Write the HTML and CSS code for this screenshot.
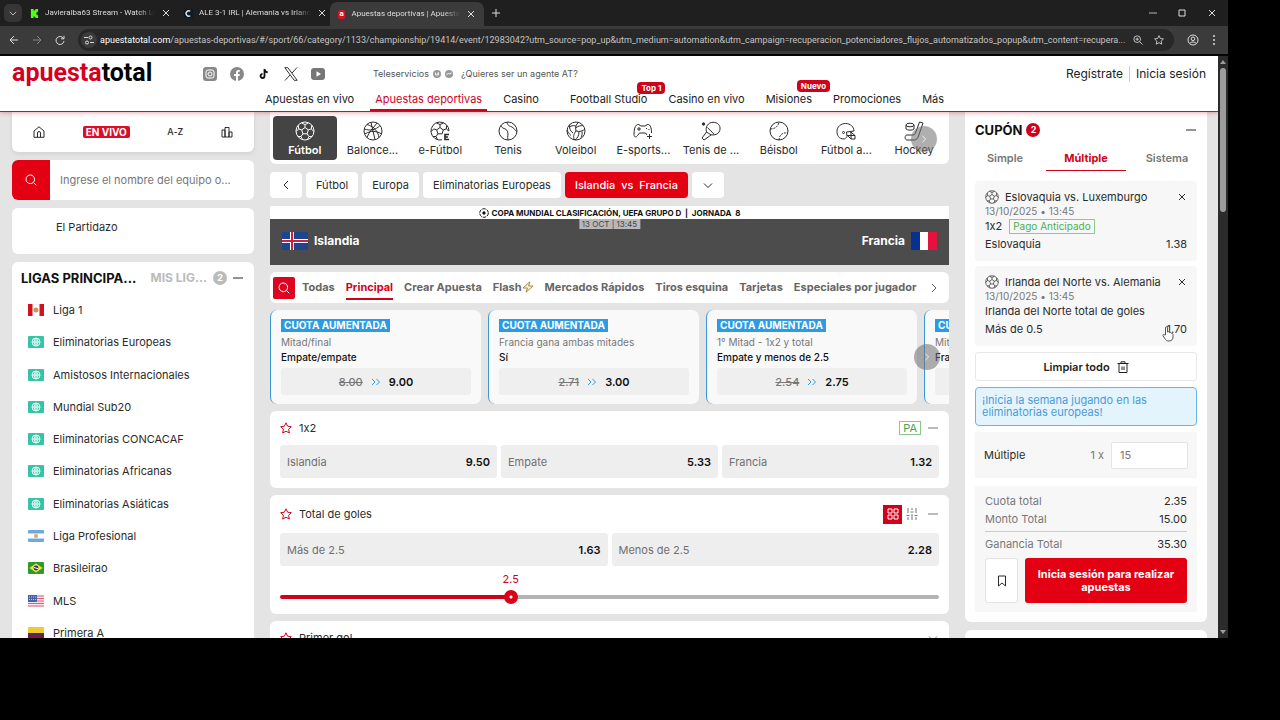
FILE: index.html
```
<!DOCTYPE html>
<html lang="es">
<head>
  <meta charset="UTF-8">
  <meta name="viewport" content="width=device-width, initial-scale=1.0">
  <title>Apuestas deportivas | Apuesta Total</title>
  <link rel="stylesheet" href="styles.css">
</head>
<body>
  <!-- shared icons -->
  <svg class="sprite" xmlns="http://www.w3.org/2000/svg">
    <symbol id="close" viewBox="0 0 10 10"><path d="M2 2l6 6M8 2L2 8"/></symbol>
    <symbol id="chev-down" viewBox="0 0 10 10"><path d="M1 3.500L5 7.500l4-4"/></symbol>
    <symbol id="chev-right" viewBox="0 0 10 10"><path d="M3 1l4 4-4 4"/></symbol>
    <symbol id="chev-left" viewBox="0 0 10 10"><path d="M7 1L3 5l4 4"/></symbol>
    <symbol id="minus" viewBox="0 0 10 10"><path d="M0 5h10"/></symbol>
    <symbol id="search" viewBox="0 0 12 12"><circle cx="5.300" cy="5.300" r="4.300"/><path d="M8.500 8.500L11.300 11.300"/></symbol>
    <symbol id="star" viewBox="0 0 12 12"><path d="M6 .8l1.600 3.400 3.700.5-2.700 2.600.7 3.700L6 9.200 2.700 11l.7-3.700L.7 4.700l3.700-.5z"/></symbol>
    <symbol id="ball" viewBox="0 0 20 20"><circle cx="10" cy="10" r="9"/><path d="M10 6.500l3.300 2.400-1.200 3.900H7.900L6.700 8.900zM10 6.500V3.500M13.300 8.900l3-1M12.100 12.800l1.900 2.700M7.900 12.800L6 15.500M6.700 8.900l-3-1M6.500 2L10 3.500 13.500 2M1.200 10.500l2.500-2.600-.4-3.500M18.800 10.500l-2.500-2.600.4-3.500M3 15.500l3 0 1.500 3M17 15.500l-3 0-1.500 3"/></symbol>
    <symbol id="world" viewBox="0 0 16 12"><rect width="16" height="12" rx="1" fill="#35c4a6" stroke="none"/><circle cx="8" cy="6" r="4"/><path d="M4 6h8M8 2v8M8 2c-2.500 2.500-2.500 5.500 0 8M8 2c2.500 2.500 2.500 5.500 0 8"/></symbol>
    <symbol id="double" viewBox="0 0 10 8"><path d="M1 1l3 3-3 3M5.500 1l3 3-3 3"/></symbol>
  </svg>

  <div class="browser">
    <div class="titlebar">
      <button class="tab-search" aria-label="Buscar pestañas"><svg class="icon s8"><use href="#chev-down"/></svg></button>
      <div class="tab">
        <svg class="favicon" viewBox="0 0 10 10"><path fill="#53fc18" d="M1 0h3v2h1V1h1V0h3v3H8v1H7v2h1v1h1v3H6V9H5V8H4v2H1z"/></svg>
        <span>Javieralba63 Stream - Watch Li</span>
        <button aria-label="Cerrar"><svg class="icon s10"><use href="#close"/></svg></button>
      </div>
      <div class="tab">
        <svg class="favicon" viewBox="0 0 10 10"><rect width="10" height="10" rx="2" fill="#0c1a26"/><path d="M7 2.500A3 3 0 1 0 7 7.500" fill="none" stroke="#dfe9f0" stroke-width="1.500"/></svg>
        <span>ALE 3-1 IRL | Alemania vs Irland</span>
        <button aria-label="Cerrar"><svg class="icon s10"><use href="#close"/></svg></button>
      </div>
      <div class="tab active">
        <b class="favicon at">a</b>
        <span>Apuestas deportivas | Apuesta</span>
        <button aria-label="Cerrar"><svg class="icon s10"><use href="#close"/></svg></button>
      </div>
      <button class="new-tab" aria-label="Nueva pestaña"><svg class="icon s8" viewBox="0 0 8 8"><path d="M4 0v8M0 4h8"/></svg></button>
      <div class="window-buttons">
        <button aria-label="Minimizar"><svg class="icon s8"><use href="#minus"/></svg></button>
        <button aria-label="Maximizar"><svg class="icon s8" viewBox="0 0 8 8"><path d="M1 1h6v6H1z"/></svg></button>
        <button aria-label="Cerrar ventana"><svg class="icon s10"><use href="#close"/></svg></button>
      </div>
    </div>

    <div class="toolbar">
      <button aria-label="Atrás"><svg class="icon s10" viewBox="0 0 10 10"><path d="M9 5H1M5 1L1 5l4 4"/></svg></button>
      <button class="off" aria-label="Adelante"><svg class="icon s10" viewBox="0 0 10 10"><path d="M1 5h8M5 1l4 4-4 4"/></svg></button>
      <button aria-label="Recargar"><svg class="icon s10" viewBox="0 0 10 10"><path d="M8.500 3.500A4 4 0 1 0 9 6M9 .8v3H6"/></svg></button>
      <div class="address">
        <span class="site-info"><svg class="icon s10" viewBox="0 0 10 10"><path d="M0 2.500h4M6 7.500h4"/><circle cx="6.500" cy="2.500" r="1.500"/><circle cx="3" cy="7.500" r="1.500"/></svg></span>
        <span class="url"><em>apuestatotal.com</em>/apuestas-deportivas/#/sport/66/category/1133/championship/19414/event/12983042?utm_source=pop_up&amp;utm_medium=automation&amp;utm_campaign=recuperacion_potenciadores_flujos_automatizados_popup&amp;utm_content=recupera...</span>
        <svg class="icon s10" viewBox="0 0 12 12"><circle cx="5" cy="5" r="4"/><path d="M8 8l3.500 3.500M5 3v4M3 5h4"/></svg>
        <svg class="icon s10 bookmark" viewBox="0 0 12 12"><use href="#star"/></svg>
      </div>
      <button aria-label="Perfil"><svg class="icon s12" viewBox="0 0 12 12"><circle cx="6" cy="6" r="5"/><circle cx="6" cy="4.800" r="1.800"/><path d="M2.800 9.500c1-2 5.400-2 6.400 0"/></svg></button>
      <button aria-label="Menú"><svg class="dots" viewBox="0 0 4 12"><circle cx="2" cy="2" r="1"/><circle cx="2" cy="6" r="1"/><circle cx="2" cy="10" r="1"/></svg></button>
    </div>

    <div class="viewport">
      <div class="page">
        <header class="header">
          <div class="header-top">
            <a class="logo" href="#">apuesta<span>total</span></a>
            <div class="social">
              <a href="#" aria-label="Instagram"><svg viewBox="0 0 14 14"><rect width="14" height="14" rx="3" fill="#888"/><rect x="3" y="3" width="8" height="8" rx="2" fill="none" stroke="#fff"/><circle cx="7" cy="7" r="2" fill="none" stroke="#fff"/></svg></a>
              <a href="#" aria-label="Facebook"><svg viewBox="0 0 14 14"><circle cx="7" cy="7" r="7" fill="#888"/><path fill="#fff" d="M6 14V9H4V7h2V5.500C6 3.500 7.200 2.800 9.800 3v1.800C8.300 4.700 8 5 8 6v1h1.800l-.3 2H8v5z"/></svg></a>
              <a href="#" aria-label="TikTok"><svg viewBox="0 0 14 14"><path d="M7.500 2v7a2 2 0 1 1-2-2M7.500 2.500c.5 2 1.500 2.700 3.200 2.800" fill="none" stroke="#111" stroke-width="1.800"/></svg></a>
              <a href="#" aria-label="X"><svg viewBox="0 0 14 14"><path d="M.8.700h3L13.200 13.300h-3zM13 .500L8 6M6 8l-5 5.500" fill="none" stroke="#333"/></svg></a>
              <a href="#" aria-label="YouTube"><svg viewBox="0 0 14 14"><rect y="1" width="14" height="12" rx="3" fill="#777"/><path fill="#fff" d="M5.500 4.300v5.400L10 7z"/></svg></a>
            </div>
            <a class="small-link" href="#">Teleservicios
              <svg class="s8" viewBox="0 0 8 8"><circle cx="4" cy="4" r="4" fill="#999"/><path d="M2.500 2.500v2.500h3V3M4 5l1.500-3" fill="none" stroke="#fff" stroke-width=".8"/></svg>
              <svg class="s8" viewBox="0 0 8 8"><circle cx="4" cy="4" r="4" fill="#999"/><path d="M1.500 5l2-2 1 1 2-1" fill="none" stroke="#fff"/></svg>
            </a>
            <a class="small-link" href="#">¿Quieres ser un agente AT?</a>
            <div class="account">
              <a href="#">Regístrate</a>
              <a href="#">Inicia sesión</a>
            </div>
          </div>
          <nav class="main-nav">
            <a href="#">Apuestas en vivo</a>
            <a class="active" href="#">Apuestas deportivas</a>
            <a href="#">Casino</a>
            <a class="wide" href="#">Football Studio <span class="tag">Top 1</span></a>
            <a href="#">Casino en vivo</a>
            <a href="#">Misiones <span class="tag high">Nuevo</span></a>
            <a href="#">Promociones</a>
            <a href="#">Más</a>
          </nav>
        </header>

        <main class="columns">
          <aside class="left">
            <nav class="card quick">
              <a href="#" aria-label="Inicio"><svg class="icon s12" viewBox="0 0 12 12"><path d="M1 5l5-4.200L11 5v6.300H1zM4.500 11V7a1.500 1.500 0 0 1 3 0v4"/></svg></a>
              <a class="live" href="#">EN VIVO</a>
              <a class="az" href="#">A-Z</a>
              <a href="#" aria-label="Resultados"><svg class="icon s12" viewBox="0 0 12 12"><path d="M1 4h3v7H1zM4 1.500h4V11H4zM8 6h3v5H8z"/></svg></a>
            </nav>

            <form class="team-search">
              <button type="button" aria-label="Buscar"><svg class="icon s12"><use href="#search"/></svg></button>
              <input type="text" aria-label="Buscar equipo" placeholder="Ingrese el nombre del equipo o...">
            </form>

            <a class="card partidazo" href="#">El Partidazo</a>

            <section class="card leagues">
              <div class="leagues-head">
                <h2>LIGAS PRINCIPA...</h2>
                <h2 class="muted">MIS LIG...</h2>
                <span class="count">2</span>
                <svg class="icon s10"><use href="#minus"/></svg>
              </div>
              <ul>
                <li><svg class="flag" viewBox="0 0 16 12"><rect width="16" height="12" rx="1" fill="#fff"/><path fill="#d0121f" d="M0 0h4.500v12H0zM11.500 0H16v12h-4.500z"/><circle cx="8" cy="6" r="2.500" fill="#c09a6b"/></svg><a href="#">Liga 1</a></li>
                <li><svg class="flag world"><use href="#world"/></svg><a href="#">Eliminatorias Europeas</a></li>
                <li><svg class="flag world"><use href="#world"/></svg><a href="#">Amistosos Internacionales</a></li>
                <li><svg class="flag world"><use href="#world"/></svg><a href="#">Mundial Sub20</a></li>
                <li><svg class="flag world"><use href="#world"/></svg><a href="#">Eliminatorias CONCACAF</a></li>
                <li><svg class="flag world"><use href="#world"/></svg><a href="#">Eliminatorias Africanas</a></li>
                <li><svg class="flag world"><use href="#world"/></svg><a href="#">Eliminatorias Asiáticas</a></li>
                <li><svg class="flag" viewBox="0 0 16 12"><rect width="16" height="12" rx="1" fill="#6fa8e0"/><path fill="#fff" d="M0 3.500h16v5H0z"/><circle cx="8" cy="6" r="2" fill="#e8a35c"/></svg><a href="#">Liga Profesional</a></li>
                <li><svg class="flag" viewBox="0 0 16 12"><rect width="16" height="12" rx="1" fill="#2f9a2c"/><path fill="#f3e23b" d="M8 1.500L14.500 6 8 10.500 1.500 6z"/><circle cx="8" cy="6" r="2.400" fill="#23346f"/><path d="M6 5.500l4 1.200" stroke="#fff"/></svg><a href="#">Brasileirao</a></li>
                <li><svg class="flag" viewBox="0 0 16 12"><rect width="16" height="12" rx="1" fill="#f6e4ea"/><path d="M0 1h16M0 3.500h16M0 6h16M0 8.500h16M0 11h16" stroke="#e0607a" stroke-width="1.200"/><path fill="#4564a8" d="M0 0h9v7H0z"/><path d="M1 2h7M1 4.500h7" stroke="#b7c6e6" stroke-dasharray="1 1"/></svg><a href="#">MLS</a></li>
                <li><svg class="flag" viewBox="0 0 16 12"><path fill="#f4c92c" d="M0 0h16v6H0z"/><path fill="#36346f" d="M0 6h16v3H0z"/><path fill="#8d1238" d="M0 9h16v3H0z"/></svg><a href="#">Primera A</a></li>
              </ul>
            </section>
          </aside>

          <div class="center">
            <nav class="card sports">
              <a class="active" href="#"><svg class="icon s20"><use href="#ball"/></svg>Fútbol</a>
              <a href="#"><svg class="icon s20" viewBox="0 0 20 20"><circle cx="10" cy="10" r="9"/><path d="M4 3.500c7 2 11 7 12 13M8 1.500l4 17M1.500 8C7 10 13 9 17 4.500M2 13c6-4 12-3 16.500 0M4 16.500c2-6 6-9 10-14.500"/></svg>Balonce...</a>
              <a href="#"><svg class="icon s20" viewBox="0 0 20 20"><path d="M12 18.800A9 9 0 1 1 19 10M10 6.500l3.300 2.400-1.200 3.900H7.900L6.700 8.900zM10 6.500V3.500M13.300 8.900l3-1M7.900 12.800L6 15.500M6.700 8.900l-3-1M6.500 2L10 3.500 13.500 2M1.200 10.500l2.500-2.600M18.800 10l-2.500-2.100.4-3.500M3 15.500h3l1.500 3"/><path d="M19 13.500h-4v5h4M15 16h3" stroke-width="1.700"/></svg>e-Fútbol</a>
              <a href="#"><svg class="icon s20" viewBox="0 0 20 20"><circle cx="10" cy="10" r="9"/><path d="M3 4.500c1 4 5 2 6.500 6 1.300 3.500-.5 5 .5 8.500M9 1c.5 4 3 4 5 5 2.500 1.200 3 4 4.800 4.500"/></svg>Tenis</a>
              <a href="#"><svg class="icon s20" viewBox="0 0 20 20"><circle cx="10" cy="10" r="9"/><path d="M10 10C9 6 10 3 12.500 1.500M10 10c4 1 7 0 8.800-2M10 10c-2.500 3-3 6-1.500 9M7 12C4 10 3 7 3.800 3.500M5 14.500C2.500 12.500 1.500 10 1.200 9M13 10.600c0 4-1.500 6.500-4 8.300M16 10.400c.5 2.500-.2 4.500-1 6M9.500 7C12 5 15 4.500 17 4.500M9.700 5C6.500 4 5 5 4 6"/></svg>Voleibol</a>
              <a href="#"><svg class="icon s20" viewBox="0 0 20 20"><path d="M18.500 12c0-4-.5-6.500-2-8-1.500-1-3.500-.5-4 1h-5c-.5-1.500-2.500-2-4-1C1.500 5.500 1 10 1 13.500c0 3 2.500 3 3.500 1L6.500 12h6M12.500 12l1.500 2M16.500 13v5M14 15.500h5"/><path d="M6 6v4M4 8h4M13 7.500h1M15.500 8.500h1"/></svg>E-sports...</a>
              <a href="#"><svg class="icon s20" viewBox="0 0 20 20"><circle cx="2.500" cy="3" r="1.200" fill="currentColor"/><path d="M5.500 11C4 6 7 1.500 12 1.300c4.500-.1 7.500 3 7 7-.5 4-4 6.200-9 5.500zM6.500 6.500l6.800 7M5.500 11L1 17l2 2 7-5"/></svg>Tenis de ...</a>
              <a href="#"><svg class="icon s20" viewBox="0 0 20 20"><circle cx="10" cy="10" r="9"/><path d="M1.500 8c4 0 8-2.500 8.500-7M10 19c0-4.500 3.500-8 8.500-7" stroke-dasharray="2 1"/></svg>Béisbol</a>
              <a href="#"><svg class="icon s20" viewBox="0 0 20 20"><path d="M8 18C2.500 18 1 14 1 10.500 1 5.500 5 2.500 9.500 2.500c5 0 8.500 3.500 8.500 7.500l-7.500 1 .5 4.500C10 17 9 18 8 18zM14 10.500l5 4v3.500h-4l-4-4M12 14.500h7M15 11v7"/><circle cx="7.500" cy="11.500" r="1"/></svg>Fútbol a...</a>
              <a href="#"><svg class="icon s20" viewBox="0 0 20 20"><path d="M15.500 1l3.500 1-4.500 13c-.6 2-2 4-4 4H3c-2.500 0-2.500-5 0-5h6c1.500 0 2-1 2.500-2zM2 4v4c1 1.500 7 1.500 8 0V4"/><ellipse cx="6" cy="4" rx="4" ry="1.800"/></svg>Hockey</a>
              <button class="round" aria-label="Más deportes"><svg class="icon s8"><use href="#chev-right"/></svg></button>
            </nav>

            <nav class="crumbs">
              <a href="#" aria-label="Volver"><svg class="icon s10"><use href="#chev-left"/></svg></a>
              <a href="#">Fútbol</a>
              <a href="#">Europa</a>
              <a href="#">Eliminatorias Europeas</a>
              <a class="active" href="#">Islandia&nbsp; vs&nbsp; Francia</a>
              <a href="#" aria-label="Más eventos"><svg class="icon s10"><use href="#chev-down"/></svg></a>
            </nav>

            <section class="match">
              <div class="match-title"><svg class="icon s10" viewBox="0 0 10 10"><circle cx="5" cy="5" r="4.300" stroke-dasharray="3.500 1"/><circle cx="5" cy="5" r="1.200" fill="currentColor"/></svg> COPA MUNDIAL CLASIFICACIÓN, UEFA GRUPO D &nbsp;|&nbsp; JORNADA&nbsp; 8</div>
              <div class="teams">
                <span class="when">13 OCT | 13:45</span>
                <span class="team"><svg viewBox="0 0 26 18"><path fill="#20458f" d="M0 0h26v18H0z"/><path d="M10 0v18M0 9h26" stroke="#fff" stroke-width="4"/><path d="M10 0v18M0 9h26" stroke="#d0203a" stroke-width="2"/></svg>Islandia</span>
                <span class="team">Francia<svg viewBox="0 0 26 18"><path fill="#08308f" d="M0 0h9v18H0z"/><path fill="#fff" d="M9 0h8v18H9z"/><path fill="#e4123c" d="M17 0h9v18h-9z"/></svg></span>
              </div>
            </section>

            <nav class="card markets">
              <button aria-label="Buscar mercado"><svg class="icon s12"><use href="#search"/></svg></button>
              <a href="#">Todas</a>
              <a class="active" href="#">Principal</a>
              <a href="#">Crear Apuesta</a>
              <a href="#">Flash<svg class="s12" viewBox="0 0 12 12"><path d="M8 .8L1 7h4.500L4 11.200 11 5H6.500z" fill="#fff7cf" stroke="#a08c4a"/></svg></a>
              <a href="#">Mercados Rápidos</a>
              <a href="#">Tiros esquina</a>
              <a href="#">Tarjetas</a>
              <a href="#">Especiales por jugador</a>
              <svg class="icon s10 more"><use href="#chev-right"/></svg>
            </nav>

            <section class="boosts">
              <div class="boost-row">
                <article class="boost">
                  <b>CUOTA AUMENTADA</b>
                  <p>Mitad/final</p>
                  <h3>Empate/empate</h3>
                  <button><s>8.00</s><svg class="icon"><use href="#double"/></svg>9.00</button>
                </article>
                <article class="boost">
                  <b>CUOTA AUMENTADA</b>
                  <p>Francia gana ambas mitades</p>
                  <h3>Sí</h3>
                  <button><s>2.71</s><svg class="icon"><use href="#double"/></svg>3.00</button>
                </article>
                <article class="boost">
                  <b>CUOTA AUMENTADA</b>
                  <p>1° Mitad - 1x2 y total</p>
                  <h3>Empate y menos de 2.5</h3>
                  <button><s>2.54</s><svg class="icon"><use href="#double"/></svg>2.75</button>
                </article>
                <article class="boost">
                  <b>CUOTA AUMENTADA</b>
                  <p>Mitad/final</p>
                  <h3>Francia/Francia</h3>
                  <button aria-label="Apostar"></button>
                </article>
              </div>
              <button class="round" aria-label="Siguiente"><svg class="icon s8"><use href="#chev-right"/></svg></button>
            </section>

            <section class="card market">
              <div class="market-head">
                <svg class="icon s12 fav"><use href="#star"/></svg>
                <h3>1x2</h3>
                <span class="pa">PA</span>
                <svg class="icon s10"><use href="#minus"/></svg>
              </div>
              <div class="odds">
                <button>Islandia <b>9.50</b></button>
                <button>Empate <b>5.33</b></button>
                <button>Francia <b>1.32</b></button>
              </div>
            </section>

            <section class="card market">
              <div class="market-head tall">
                <svg class="icon s12 fav"><use href="#star"/></svg>
                <h3>Total de goles</h3>
                <div class="view">
                  <button class="on" aria-label="Cuadrícula"><svg class="icon s12" viewBox="0 0 12 12"><path d="M1 1h4v4H1zM7 1h4v4H7zM1 7h4v4H1zM7 7h4v4H7z"/></svg></button>
                  <button aria-label="Control deslizante"><svg class="icon s12" viewBox="0 0 12 12"><path d="M2 0v5M2 9v3M.5 7.500h3M6 0v2M6 6v6M4.500 4h3M10 0v5M10 9v3M8.500 7.500h3"/></svg></button>
                </div>
                <svg class="icon s10"><use href="#minus"/></svg>
              </div>
              <div class="odds">
                <button>Más de 2.5 <b>1.63</b></button>
                <button>Menos de 2.5 <b>2.28</b></button>
              </div>
              <div class="slider">
                <output for="goals">2.5</output>
                <input type="range" id="goals" aria-label="Total de goles" min="0.5" max="6.25" step="0.25" value="2.5">
              </div>
            </section>

            <section class="card market">
              <div class="market-head">
                <svg class="icon s12 fav"><use href="#star"/></svg>
                <h3>Primer gol</h3>
                <svg class="icon s10"><use href="#chev-down"/></svg>
              </div>
            </section>
          </div>

          <aside class="right">
            <section class="card coupon">
              <div class="coupon-head">
                <h2>CUPÓN</h2>
                <span class="count">2</span>
                <svg class="icon s10"><use href="#minus"/></svg>
              </div>
              <div class="coupon-tabs">
                <button>Simple</button>
                <button class="active">Múltiple</button>
                <button>Sistema</button>
              </div>

              <article class="bet">
                <div class="bet-name"><svg class="icon s14"><use href="#ball"/></svg>Eslovaquia vs. Luxemburgo <button aria-label="Quitar"><svg class="icon s10"><use href="#close"/></svg></button></div>
                <time>13/10/2025 • 13:45</time>
                <div class="bet-market">1x2 <span class="early">Pago Anticipado</span></div>
                <div class="bet-pick">Eslovaquia <span>1.38</span></div>
              </article>
              <article class="bet">
                <div class="bet-name"><svg class="icon s14"><use href="#ball"/></svg>Irlanda del Norte vs. Alemania <button aria-label="Quitar"><svg class="icon s10"><use href="#close"/></svg></button></div>
                <time>13/10/2025 • 13:45</time>
                <div class="bet-market">Irlanda del Norte total de goles</div>
                <div class="bet-pick">Más de 0.5 <span>1.70<svg class="hand" viewBox="0 0 12 16"><path d="M3.500 9V1.800c0-1.400 2-1.400 2 0V6c1-.6 1.800-.2 2 .6.900-.4 1.700 0 1.900.8 1-.2 1.600.3 1.600 1.200V11c0 2.500-1.500 4-4 4-2 0-3-.6-4-2.200L1 9.800c-.7-1.200.8-2 1.600-1z" fill="#fff" stroke="#555"/></svg></span></div>
              </article>

              <button class="clear">Limpiar todo <svg class="icon s12" viewBox="0 0 12 12"><path d="M.5 2.500h11M4 2.500V.8h4v1.700M2 2.500v9h8v-9M5 5.500v3.500M7 5.500v3.500"/></svg></button>
              <p class="notice">¡Inicia la semana jugando en las eliminatorias europeas!</p>

              <div class="stake">
                <label for="stake">Múltiple</label>
                <span>1 x</span>
                <input type="text" id="stake" value="15">
              </div>

              <div class="summary">
                <dl>
                  <div><dt>Cuota total</dt><dd>2.35</dd></div>
                  <div><dt>Monto Total</dt><dd>15.00</dd></div>
                  <div class="win"><dt>Ganancia Total</dt><dd>35.30</dd></div>
                </dl>
                <div class="actions">
                  <button class="save" aria-label="Guardar"><svg class="icon s12" viewBox="0 0 12 12"><path d="M2.500 1h7v10L6 8l-3.500 3z"/></svg></button>
                  <button class="login">Inicia sesión para realizar apuestas</button>
                </div>
              </div>
            </section>
            <section class="card next"></section>
          </aside>
        </main>
      </div>
      <div class="scrollbar"><i class="up"></i><i class="thumb"></i><i class="down"></i></div>
    </div>
  </div>
</body>
</html>
```
FILE: styles.css
```
* {
  box-sizing: border-box;
}

body {
  margin: 0;
  height: 100vh;
  padding: 0 52px 82px 0;
  background: #000;
  font-family: Inter, Roboto, "Liberation Sans", sans-serif;
  font-feature-settings: "calt" 0;
  font-size: 11px;
  line-height: 16px;
  color: #2b2b2b;
  overflow: hidden;
}

a {
  color: inherit;
  text-decoration: none;
}

button, input {
  font: inherit;
  color: inherit;
  border: 0;
  padding: 0;
  margin: 0;
  background: none;
}

button {
  cursor: pointer;
}

h2, h3, p, ul, dl, dd {
  margin: 0;
  padding: 0;
}

svg {
  display: block;
  flex: none;
}

.sprite {
  position: absolute;
  width: 0;
  height: 0;
}

.icon {
  fill: none;
  stroke: currentColor;
  stroke-width: 1;
}

.s8 { width: 8px; height: 8px; }
.s10 { width: 10px; height: 10px; }
.s12 { width: 12px; height: 12px; }
.s14 { width: 14px; height: 14px; }
.s20 { width: 20px; height: 20px; }

/* browser window */
.browser {
  display: flex;
  flex-direction: column;
  height: 100%;
  overflow: hidden;
}

.titlebar {
  display: flex;
  flex: none;
  align-items: center;
  height: 26px;
  padding-left: 4px;
  background: #1f1f1f;
  color: #dedede;
  font-family: Roboto, sans-serif;
  font-size: 8px;
}

.tab-search {
  display: grid;
  place-items: center;
  width: 18px;
  height: 18px;
  border-radius: 5px;
  background: #363636;
}

.tab {
  display: flex;
  align-items: center;
  gap: 6px;
  width: 154px;
  height: 24px;
  padding: 0 8px;
}

.tab span {
  flex: 1;
  white-space: nowrap;
  mask-image: linear-gradient(90deg, #000 85%, transparent);
}

.tab.active {
  align-self: flex-end;
  border-radius: 7px 7px 0 0;
  background: #3b3b3b;
}

.favicon {
  width: 9px;
  height: 9px;
}

.favicon.at {
  border-radius: 2px;
  background: #d90d25;
  color: #fff;
  line-height: 8px;
  text-align: center;
}

.new-tab {
  margin-left: 8px;
}

.window-buttons {
  display: flex;
  align-items: center;
  gap: 21px;
  margin-left: auto;
  padding-right: 11px;
}

.toolbar {
  display: flex;
  flex: none;
  align-items: center;
  gap: 13px;
  height: 30px;
  padding: 0 12px 0 9px;
  border-bottom: 2px solid #050505;
  background: #3b3b3b;
  color: #dcdcdc;
}

.toolbar .off {
  color: #858585;
}

.address {
  display: flex;
  flex: 1;
  align-items: center;
  gap: 8px;
  min-width: 0;
  height: 22px;
  padding: 0 10px 0 3px;
  border-radius: 11px;
  background: #282828;
}

.address .bookmark {
  margin-left: 3px;
}

.site-info {
  display: grid;
  place-items: center;
  width: 16px;
  height: 16px;
  margin-right: -5px;
  border-radius: 8px;
  background: #3b3b3b;
}

.url {
  flex: 1;
  overflow: hidden;
  white-space: nowrap;
  font-family: Roboto, sans-serif;
  font-size: 9px;
  color: #c4c4c4;
}

.url em {
  font-style: normal;
  color: #fff;
}

.dots {
  width: 4px;
  height: 12px;
  fill: #dcdcdc;
}

.viewport {
  display: flex;
  flex: 1;
  min-height: 0;
}

.page {
  flex: 1;
  min-width: 0;
  overflow: hidden;
  background: #e4e4e4;
}

.scrollbar {
  display: flex;
  flex-direction: column;
  align-items: center;
  gap: 4px;
  width: 10px;
  padding: 4px 0;
  background: #2b2b2b;
}

.scrollbar .thumb {
  width: 6px;
  height: 25%;
  margin-bottom: auto;
  border-radius: 3px;
  background: #9c9c9c;
}

.scrollbar .up, .scrollbar .down {
  border: 3px solid transparent;
}

.scrollbar .up {
  border-top: 0;
  border-bottom: 4px solid #9c9c9c;
}

.scrollbar .down {
  border-bottom: 0;
  border-top: 4px solid #9c9c9c;
}

/* header */
.header {
  position: relative;
  z-index: 1;
  height: 56px;
  border-bottom: 1px solid #c8102e;
  background: #fff;
  box-shadow: 0 1px 4px rgba(200, 16, 46, 0.35);
  color: #222;
}

.header-top {
  display: flex;
  align-items: center;
  height: 36px;
  padding: 0 12px;
}

.logo {
  width: 191px;
  padding-bottom: 2px;
  font-family: Roboto, sans-serif;
  font-size: 25px;
  font-weight: bold;
  color: #d4001f;
}

.logo span {
  color: #000;
}

.social {
  display: flex;
  gap: 13px;
  width: 170px;
}

.social svg {
  width: 14px;
  height: 14px;
}

.small-link {
  display: flex;
  align-items: center;
  gap: 4px;
  margin-right: 8px;
  font-size: 9px;
  color: #555;
}

.account {
  display: flex;
  margin-left: auto;
  font-size: 12px;
}

.account a + a {
  margin-left: 6px;
  padding-left: 6px;
  border-left: 1px solid #ccc;
}

.main-nav {
  display: flex;
  gap: 21px;
  padding-left: 265px;
  line-height: 14px;
}

.main-nav a {
  position: relative;
  height: 19px;
}

.main-nav .active {
  margin: 0 -5px;
  padding: 0 5px;
  border-bottom: 2px solid #d0021b;
  color: #d0021b;
}

.main-nav .wide {
  margin-left: 10px;
}

.tag {
  position: absolute;
  right: -18px;
  bottom: 17px;
  padding: 0 4px;
  border-radius: 4px;
  background: #d0021b;
  color: #fff;
  font-size: 8px;
  font-weight: bold;
  line-height: 12px;
}

.tag.high {
  bottom: 19px;
}

/* columns */
.columns {
  display: grid;
  grid-template-columns: 242px 1fr 242px;
  gap: 16px;
  padding: 0 11px 0 12px;
}

.left, .center, .right {
  display: flex;
  flex-direction: column;
  gap: 8px;
  min-width: 0;
}

.center {
  gap: 7px;
}

.card {
  border-radius: 6px;
  background: #fff;
}

.quick {
  display: flex;
  align-items: center;
  justify-content: space-between;
  height: 40px;
  padding: 0 21px;
  border-radius: 0 0 6px 6px;
  box-shadow: 0 2px 4px rgba(0, 0, 0, 0.08);
}

.live {
  padding: 0 3px;
  border-radius: 2px;
  background: #dc0d28;
  color: #fff;
  font-size: 10px;
  font-weight: bold;
  line-height: 12px;
}

.az {
  font-size: 9px;
  font-weight: 500;
}

.team-search {
  display: flex;
  height: 40px;
  border-radius: 6px;
  background: #fff;
  overflow: hidden;
}

.team-search button {
  display: grid;
  place-items: center;
  width: 38px;
  background: #e30013;
  color: #fff;
}

.team-search input {
  flex: 1;
  min-width: 0;
  padding: 0 10px;
}

.team-search input::placeholder {
  color: #777;
}

.partidazo {
  height: 46px;
  padding: 11px 44px;
}

.leagues {
  padding: 0 11px 0 9px;
}

.leagues-head {
  display: flex;
  align-items: center;
  gap: 6px;
  height: 32px;
}

h2 {
  font-size: 13px;
  line-height: 16px;
  color: #111;
}

h2.muted {
  margin-left: auto;
  font-size: 12px;
  color: #bbb;
}

.count {
  width: 14px;
  border-radius: 7px;
  background: #bbb;
  color: #fff;
  font-size: 9px;
  font-weight: bold;
  line-height: 14px;
  text-align: center;
}

.leagues ul {
  display: grid;
  grid-auto-rows: 1fr;
  height: 355px;
  list-style: none;
}

.leagues li {
  display: flex;
  align-items: center;
  gap: 9px;
  padding-left: 7px;
}

.flag {
  width: 16px;
  height: 12px;
}

.flag.world {
  fill: none;
  stroke: #e8fffa;
  stroke-width: 1;
}

/* sports strip */
.sports {
  position: relative;
  display: grid;
  grid-template-columns: repeat(10, minmax(0, 1fr));
  gap: 4px;
  height: 52px;
  padding: 4px 3px;
  border-radius: 0 0 6px 6px;
}

.sports a {
  display: flex;
  flex-direction: column;
  align-items: center;
  gap: 1px;
  padding-top: 5px;
  border-radius: 4px;
  white-space: nowrap;
}

.sports .active {
  background: #444;
  color: #fff;
  font-weight: 600;
}

.round {
  position: absolute;
  display: grid;
  place-items: center;
  width: 26px;
  height: 26px;
  border-radius: 50%;
  background: rgba(110, 110, 110, 0.55);
  color: #fff;
}

.sports .round {
  top: 14px;
  right: 12px;
}

.crumbs {
  display: flex;
  gap: 4px;
  margin: 1px 0;
}

.crumbs a {
  display: flex;
  align-items: center;
  justify-content: center;
  min-width: 32px;
  height: 26px;
  padding: 0 10px;
  border-radius: 4px;
  background: #fff;
}

.crumbs .active {
  background: #e30013;
  color: #fff;
  font-weight: 500;
}

.match-title {
  display: flex;
  align-items: center;
  justify-content: center;
  gap: 3px;
  height: 13px;
  background: #fff;
  color: #111;
  font-size: 8px;
  font-weight: bold;
}

.teams {
  position: relative;
  display: flex;
  align-items: center;
  justify-content: space-between;
  height: 46px;
  padding: 0 12px;
  background: #4c4c4c;
  color: #fff;
  font-size: 12px;
  font-weight: bold;
}

.team {
  display: flex;
  align-items: center;
  gap: 6px;
  padding-bottom: 2px;
}

.team svg {
  width: 26px;
  height: 18px;
}

.when {
  position: absolute;
  top: 0;
  left: 50%;
  padding: 0 3px;
  background: #b8b8b8;
  color: #444;
  font-size: 8px;
  font-weight: normal;
  line-height: 10px;
  transform: translateX(-50%);
}

.markets {
  display: flex;
  align-items: center;
  gap: 11px;
  height: 31px;
  padding: 0 10px 0 3px;
  color: #666;
  font-weight: bold;
  white-space: nowrap;
}

.markets button {
  display: grid;
  place-items: center;
  width: 22px;
  height: 22px;
  margin-right: -4px;
  border-radius: 2px;
  background: #dc0420;
  color: #fff;
}

.markets a {
  display: flex;
  align-items: center;
  height: 24px;
  border-bottom: 2px solid transparent;
}

.markets .active {
  border-color: #d0021b;
  color: #d0021b;
}

.markets .more {
  margin-left: auto;
}

/* boosted odds */
.boosts {
  position: relative;
}

.boost-row {
  display: flex;
  gap: 7px;
  overflow: hidden;
}

.boost {
  flex: 0 0 211px;
  height: 94px;
  padding: 9px 10px 0;
  border-left: 1px solid #3a96d8;
  border-radius: 7px;
  background: #f9f9f9;
}

.boost b {
  display: table;
  padding: 0 3px;
  background: #2a9be4;
  color: #fff;
  font-size: 10px;
  line-height: 13px;
}

.boost p {
  margin-top: 2px;
  color: #777;
  font-size: 10px;
}

.boost h3 {
  font-size: 10px;
  font-weight: 500;
  line-height: 15px;
  color: #111;
}

.boost button {
  display: flex;
  align-items: center;
  justify-content: center;
  gap: 8px;
  width: 100%;
  height: 27px;
  margin-top: 3px;
  border-radius: 3px;
  background: #efefef;
  color: #111;
  font-weight: 600;
}

.boost s {
  color: #777;
  font-weight: 500;
}

.boost button svg {
  width: 10px;
  height: 8px;
  stroke: #2a9be4;
}

.boosts .round {
  top: 34px;
  right: 9px;
}

/* markets */
.market {
  padding: 0 10px 10px;
}

.market-head {
  display: flex;
  align-items: center;
  gap: 7px;
  height: 34px;
  padding-right: 1px;
}

.market-head.tall {
  height: 38px;
}

.market-head > .icon:last-child {
  color: #777;
}

.market-head h3 {
  margin-right: auto;
  font-size: 11px;
  font-weight: normal;
}

.fav {
  color: #d0021b;
}

.pa {
  padding: 0 3px;
  border: 1px solid #8cc58e;
  color: #4ba24f;
  line-height: 12px;
}

.view {
  display: flex;
}

.view button {
  display: grid;
  place-items: center;
  width: 19px;
  height: 19px;
  color: #777;
}

.view .on {
  background: #d0021b;
  color: #fff;
}

.odds {
  display: flex;
  gap: 4px;
}

.odds button {
  display: flex;
  flex: 1;
  align-items: center;
  justify-content: space-between;
  height: 33px;
  padding: 0 7px;
  border-radius: 3px;
  background: #eee;
  color: #707070;
}

.odds b {
  color: #111;
  font-weight: 600;
}

.slider {
  position: relative;
  padding-top: 24px;
}

.slider output {
  position: absolute;
  top: 5px;
  left: 35%;
  color: #d0021b;
  transform: translateX(-50%);
}

.slider input {
  display: block;
  width: 100%;
  height: 14px;
  appearance: none;
}

.slider input::-webkit-slider-runnable-track {
  height: 4px;
  border-radius: 2px;
  background: linear-gradient(90deg, #d0021b 35%, #b3b3b3 35%);
}

.slider input::-webkit-slider-thumb {
  appearance: none;
  width: 14px;
  height: 14px;
  margin-top: -5px;
  border-radius: 50%;
  background: radial-gradient(circle, #fff 1px, #d9001b 2px);
}

/* coupon */
.coupon {
  padding: 9px 10px 10px;
  border-radius: 0 0 6px 6px;
}

.coupon-head {
  display: flex;
  align-items: center;
  gap: 4px;
  height: 18px;
}

.coupon-head .icon {
  margin-left: auto;
  margin-right: 1px;
}

.coupon .count {
  background: #d0021b;
}

.coupon-tabs {
  display: grid;
  grid-template-columns: 60px 1fr 60px;
  column-gap: 11px;
  height: 32px;
  margin-bottom: 10px;
  font-weight: 600;
  color: #777;
}

.coupon-tabs button {
  padding-top: 6px;
  border-bottom: 1px solid transparent;
}

.coupon-tabs .active {
  border-color: #d0021b;
  color: #d0021b;
  font-weight: bold;
}

.bet {
  margin-bottom: 5px;
  padding: 9px 10px 8px;
  border-radius: 4px;
  background: #f7f7f7;
}

.bet-name {
  display: flex;
  align-items: center;
  gap: 6px;
  white-space: nowrap;
  line-height: 14px;
}

.bet-name button {
  margin-left: auto;
}

.bet time {
  display: block;
  color: #777;
  font-size: 10px;
  line-height: 15px;
}

.bet-market {
  display: flex;
  align-items: center;
  gap: 7px;
  line-height: 15px;
}

.early {
  padding: 0 3px;
  border: 1px solid #8ccb90;
  color: #4caf50;
  font-size: 10px;
  line-height: 13px;
}

.bet-pick {
  display: flex;
  justify-content: space-between;
  padding-top: 2px;
  line-height: 17px;
}

.bet-pick span {
  position: relative;
}

.hand {
  position: absolute;
  top: 5px;
  left: -5px;
  width: 12px;
  height: 16px;
}

.clear {
  display: flex;
  align-items: center;
  justify-content: center;
  gap: 7px;
  width: 100%;
  height: 29px;
  margin-top: 6px;
  border: 1px solid #e8e8e8;
  border-radius: 3px;
  color: #222;
  font-weight: 600;
}

.notice {
  height: 39px;
  margin: 6px 0;
  padding: 6px;
  border: 1px solid #6cb5e6;
  border-radius: 4px;
  background: #e4f4fd;
  color: #4c9bd6;
  line-height: 12px;
}

.stake {
  display: flex;
  align-items: center;
  gap: 7px;
  height: 46px;
  margin-bottom: 8px;
  padding: 0 9px;
  background: #f7f7f7;
}

.stake label {
  margin-right: auto;
}

.stake span, .stake input {
  color: #777;
}

.stake input {
  width: 77px;
  height: 27px;
  padding: 0 8px;
  border: 1px solid #e4e4e4;
  border-radius: 2px;
  background: #fff;
}

.summary {
  padding: 6px 10px 9px;
  background: #f7f7f7;
}

dl div {
  display: flex;
  justify-content: space-between;
  line-height: 18px;
}

dl .win {
  margin-top: 3px;
  padding-top: 3px;
  border-top: 1px solid #ccc;
}

dt {
  color: #777;
}

.actions {
  display: flex;
  gap: 7px;
  margin-top: 5px;
}

.save {
  display: grid;
  place-items: center;
  width: 33px;
  height: 45px;
  border: 1px solid #e4e4e4;
  border-radius: 3px;
  background: #fff;
}

.login {
  flex: 1;
  border-radius: 3px;
  background: #e30013;
  color: #fff;
  font-weight: bold;
  line-height: 13px;
}

.next {
  height: 60px;
}
```
